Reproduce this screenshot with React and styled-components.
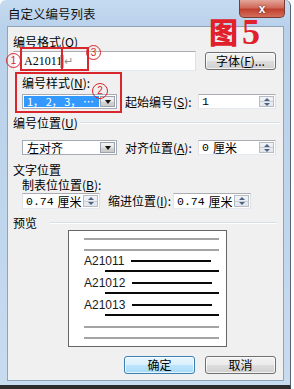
import React from 'react'
import styled, { createGlobalStyle } from 'styled-components'

const GlobalStyle = createGlobalStyle`
  html, body { margin: 0; padding: 0; background: #fbfbfb; }
  body {
    font-family: "Noto Sans CJK SC", "Liberation Sans", sans-serif;
    font-size: 12px;
    color: #000;
  }
  * { box-sizing: border-box; }
`

const RED = '#d8262c'

const Window = styled.div`
  position: relative;
  width: 291px;
  height: 389px;
  display: flex;
  flex-direction: column;
  padding: 0 6px 4px 7px;
  background: linear-gradient(#c6dbf1, #b9d1ea 26px, #c0d6ed 60%, #c8dcf0);
  border-right: 1px solid #5a6470;
  border-bottom: 4px solid #2c2c2c;
  border-top-left-radius: 6px;
  border-top-right-radius: 6px;
`

const TitleBar = styled.div`
  display: flex;
  align-items: flex-start;
  height: 26px;
  flex-shrink: 0;
`

const Title = styled.div`
  padding: 6px 0 0 1px;
  font-size: 12.5px;
  line-height: 16px;
  color: #111;
  white-space: nowrap;
`

const CloseButton = styled.div`
  margin-left: auto;
  margin-right: -1px;
  width: 46px;
  height: 18px;
  display: flex;
  align-items: center;
  justify-content: center;
  border: 1px solid #7a3b36;
  border-top: none;
  border-radius: 0 0 5px 5px;
  background: linear-gradient(#e3a699, #cf6a5a 45%, #c0402e 55%, #d4705c);
  color: #fff;
  font-family: "Liberation Sans", sans-serif;
  font-weight: bold;
  font-size: 12px;
  text-shadow: 0 0 2px #4a1a14;
`

const Client = styled.div`
  flex: 1;
  display: flex;
  flex-direction: column;
  padding: 8px 7px 0 5px;
  background: #f0f0f0;
  border: 1px solid #8fa3b9;
`

const Label = styled.div`
  height: 14px;
  line-height: 14px;
  margin-top: ${p => p.$mt || 0}px;
  padding-left: ${p => (p.$indent ? 9 : 0)}px;
  white-space: nowrap;
`

const GroupHeader = styled.div`
  display: flex;
  align-items: center;
  height: 14px;
  line-height: 14px;
  margin-top: ${p => p.$mt || 0}px;
  white-space: nowrap;
`

const Rule = styled.div`
  flex: 1;
  height: 2px;
  margin-left: ${p => p.$gap}px;
  margin-right: ${p => p.$over}px;
  border-top: 1px solid #d5dfe5;
  border-bottom: 1px solid #fff;
`

const FormatRow = styled.div`
  display: flex;
  align-items: center;
  gap: 9px;
  height: 20px;
  margin-top: 2px;
`

const TextField = styled.div`
  width: 183px;
  height: 20px;
  display: flex;
  align-items: center;
  padding-left: 10px;
  background: #fff;
  border: 1px solid #abadb3;
  border-color: #abadb3 #dbdfe6 #e3e9ef #e2e3ea;
  font-family: "Liberation Serif", serif;
  font-size: 12px;
`

const Cursor = styled.span`
  display: inline-block;
  width: 4px;
  height: 13px;
  margin-left: -2px;
  background: #b8b8b8;
`

const Pilcrow = styled.span`
  color: #8c8c8c;
  font-size: 11px;
  font-family: "DejaVu Sans", sans-serif;
`

const Button = styled.div`
  width: 71px;
  height: 18px;
  display: flex;
  align-items: center;
  justify-content: center;
  border: 1px solid ${p => (p.$primary ? '#3c7fb1' : '#707070')};
  border-radius: 3px;
  background: ${p =>
    p.$primary
      ? 'linear-gradient(#eaf6fd, #d9f0fc 50%, #bee6fd 51%, #a7d9f5)'
      : 'linear-gradient(#f2f2f2, #ebebeb 50%, #dddddd 51%, #cfcfcf)'};
  box-shadow: inset 0 0 0 1px rgba(255, 255, 255, 0.7);
  line-height: 14px;
  white-space: nowrap;
`

const ControlRow = styled.div`
  display: flex;
  align-items: center;
  height: ${p => p.$h || 15}px;
  margin-top: ${p => p.$mt || 0}px;
  padding-left: 9px;
`

const Combo = styled.div`
  width: 95px;
  height: 100%;
  display: flex;
  padding: 1px;
  background: #fff;
  border: 1px solid #a4abb4;
`

const ComboValue = styled.div`
  flex: 1;
  display: flex;
  align-items: center;
  padding-left: 3px;
  background: ${p => (p.$selected ? '#3399ff' : 'transparent')};
  color: ${p => (p.$selected ? '#fff' : '#000')};
  line-height: 13px;
  white-space: nowrap;
`

const ComboArrow = styled.div`
  width: 15px;
  flex-shrink: 0;
  display: flex;
  align-items: center;
  justify-content: center;
  margin-left: 1px;
  border: 1px solid #9aa2ad;
  background: linear-gradient(#f4f4f4, #e3e3e3 50%, #d4d4d4 51%, #cacaca);
  &::after {
    content: '';
    border-left: 3.5px solid transparent;
    border-right: 3.5px solid transparent;
    border-top: 4px solid #111;
  }
`

const Seq = styled.span`
  font-size: 11px;
  letter-spacing: -0.3px;
`

const FieldLabel = styled.div`
  flex: ${p => (p.$w ? 'none' : 1)};
  width: ${p => (p.$w ? `${p.$w}px` : 'auto')};
  margin-left: 8px;
  white-space: nowrap;
  line-height: 14px;
`

const SpinField = styled.div`
  width: 78px;
  height: 100%;
  display: flex;
  padding: 1px;
  background: #fff;
  border: 1px solid #abadb3;
  border-color: #abadb3 #dbdfe6 #e3e9ef #e2e3ea;
`

const SpinText = styled.div`
  flex: 1;
  display: flex;
  align-items: center;
  padding-left: 2px;
  line-height: 13px;
  white-space: nowrap;
`

const Num = styled.span`
  font-family: "Liberation Mono", monospace;
  font-size: 11.5px;
  margin-right: ${p => p.$space || 0}px;
`

const SpinButtons = styled.div`
  width: 15px;
  flex-shrink: 0;
  display: flex;
  flex-direction: column;
  border: 1px solid #b7bcc4;
  background: linear-gradient(#f1f3f6, #e2e6ec);
`

const SpinHalf = styled.div`
  flex: 1;
  display: flex;
  align-items: center;
  justify-content: center;
  & + & { border-top: 1px solid #c9ced6; }
  &::after {
    content: '';
    border-left: 3px solid transparent;
    border-right: 3px solid transparent;
    ${p => (p.$down ? 'border-top' : 'border-bottom')}: 3px solid #4e6284;
  }
`

const PreviewBox = styled.div`
  width: 159px;
  height: 117px;
  margin-left: 55px;
  display: flex;
  flex-direction: column;
  padding: 7px 7px 0 15px;
  background: #fff;
  border: 1px solid #666;
`

const Bar = styled.div`
  height: 2px;
  flex-shrink: 0;
  width: ${p => p.$w}px;
  margin-top: ${p => p.$mt || 0}px;
  margin-left: ${p => p.$ml || 0}px;
  background: ${p => (p.$gray ? '#a4a4a4' : '#0a0a0a')};
`

const PreviewRow = styled.div`
  display: flex;
  align-items: center;
  height: 12px;
  margin-top: ${p => p.$mt}px;
  font-family: "Liberation Sans", sans-serif;
  font-size: 12px;
  color: #1a1a1a;
`

const ButtonRow = styled.div`
  display: flex;
  justify-content: flex-end;
  gap: 10px;
  margin-top: 9px;
`

const RedBox = styled.div`
  position: absolute;
  left: ${p => p.$x}px;
  top: ${p => p.$y}px;
  width: ${p => p.$w}px;
  height: ${p => p.$h}px;
  border: 2px solid ${RED};
  pointer-events: none;
`

const Mark = styled.div`
  position: absolute;
  left: ${p => p.$x}px;
  top: ${p => p.$y}px;
  width: ${p => p.$size}px;
  height: ${p => p.$size}px;
  display: flex;
  align-items: center;
  justify-content: center;
  border: 1.5px solid ${RED};
  border-radius: 50%;
  color: ${RED};
  font-family: "Liberation Sans", sans-serif;
  font-size: 10px;
  line-height: 10px;
`

const Stamp = styled.div`
  position: absolute;
  left: 209px;
  top: 14px;
  display: flex;
  align-items: baseline;
  gap: 4px;
  color: #e0202a;
  white-space: nowrap;
`

const StampHan = styled.span`
  font-family: "Noto Sans CJK SC", sans-serif;
  font-weight: 900;
  font-size: 29px;
  line-height: 34px;
`

const StampDigit = styled.span`
  font-family: "Liberation Serif", serif;
  font-weight: bold;
  font-size: 36px;
  line-height: 34px;
`

const Spinner = ({ children }) => (
  <SpinField>
    <SpinText>{children}</SpinText>
    <SpinButtons>
      <SpinHalf />
      <SpinHalf $down />
    </SpinButtons>
  </SpinField>
)

const preview = [
  { kind: 'gray', mt: 0 },
  { kind: 'gray', mt: 9 },
  { kind: 'row', text: 'A21011', mt: 4 },
  { kind: 'long', mt: 3 },
  { kind: 'row', text: 'A21012', mt: 5 },
  { kind: 'long', mt: 3 },
  { kind: 'row', text: 'A21013', mt: 5 },
  { kind: 'long', mt: 3 },
  { kind: 'gray', mt: 10 },
  { kind: 'gray', mt: 9 }
]

const Preview = () => (
  <PreviewBox>
    {preview.map((item, i) => {
      if (item.kind === 'gray') return <Bar key={i} $gray $w={135} $mt={item.mt} />
      if (item.kind === 'long') return <Bar key={i} $w={114} $ml={21} $mt={item.mt} />
      return (
        <PreviewRow key={i} $mt={item.mt}>
          {item.text}
          <Bar $w={80} $ml={7} />
        </PreviewRow>
      )
    })}
  </PreviewBox>
)

export default function App() {
  return (
    <>
      <GlobalStyle />
      <Window>
        <TitleBar>
          <Title>自定义编号列表</Title>
          <CloseButton>x</CloseButton>
        </TitleBar>
        <Client>
          <Label>编号格式(<u>O</u>)</Label>
          <FormatRow>
            <TextField>
              A21011<Cursor />
              <Pilcrow>↵</Pilcrow>
            </TextField>
            <Button>字体(<u>F</u>)...</Button>
          </FormatRow>

          <Label $indent $mt={5}>编号样式(<u>N</u>):</Label>
          <ControlRow $mt={4}>
            <Combo>
              <ComboValue $selected>
                <Seq>1， 2， 3， …</Seq>
              </ComboValue>
              <ComboArrow />
            </Combo>
            <FieldLabel>起始编号(<u>S</u>):</FieldLabel>
            <Spinner>
              <Num>1</Num>
            </Spinner>
          </ControlRow>

          <GroupHeader $mt={7}>
            编号位置(<u>U</u>)
            <Rule $gap={2} $over={-4} />
          </GroupHeader>
          <ControlRow $mt={10}>
            <Combo>
              <ComboValue>左对齐</ComboValue>
              <ComboArrow />
            </Combo>
            <FieldLabel>对齐位置(<u>A</u>):</FieldLabel>
            <Spinner>
              <Num $space={4}>0</Num>厘米
            </Spinner>
          </ControlRow>

          <GroupHeader $mt={8}>文字位置</GroupHeader>
          <Label $indent $mt={1}>制表位位置(<u>B</u>):</Label>
          <ControlRow $mt={1} $h={16}>
            <Spinner>
              <Num $space={4}>0.74</Num>厘米
            </Spinner>
            <FieldLabel $w={65}>缩进位置(<u>I</u>):</FieldLabel>
            <Spinner>
              <Num $space={4}>0.74</Num>厘米
            </Spinner>
          </ControlRow>

          <GroupHeader $mt={7}>
            预览
            <Rule $gap={13} $over={-1} />
          </GroupHeader>
          <Preview />

          <ButtonRow>
            <Button $primary>确定</Button>
            <Button>取消</Button>
          </ButtonRow>
        </Client>

        <Stamp>
          <StampHan>图</StampHan>
          <StampDigit>5</StampDigit>
        </Stamp>
        <RedBox $x={20} $y={47} $w={43} $h={24} />
        <RedBox $x={61} $y={47} $w={28} $h={24} />
        <RedBox $x={15} $y={72} $w={107} $h={41} />
        <Mark $x={6} $y={53} $size={15}>1</Mark>
        <Mark $x={86} $y={45} $size={15}>3</Mark>
        <Mark $x={92} $y={83} $size={16}>2</Mark>
      </Window>
    </>
  )
}
